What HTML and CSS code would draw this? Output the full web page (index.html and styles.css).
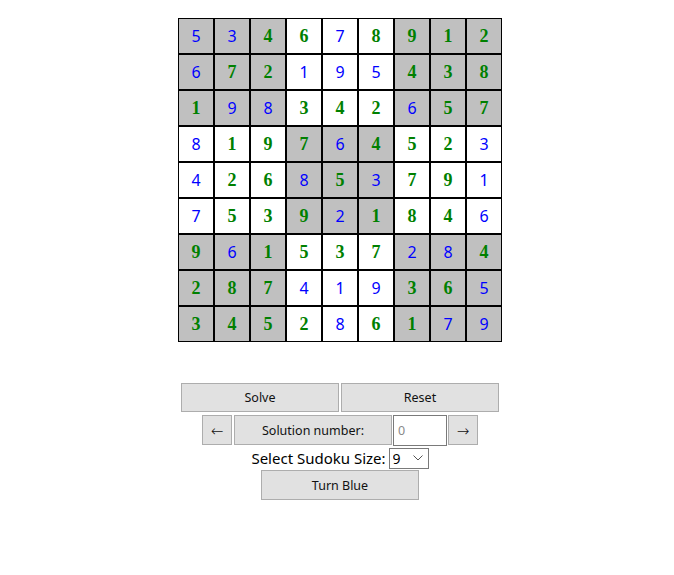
FILE: index.html
```html
<!DOCTYPE html>
<html>
<head>
<meta charset="utf-8">
<link rel="stylesheet" href="styles.css">
</head>
<body>
<div class="app">
  <table class="board">
    <tbody>
      <tr><td class="s given">5</td><td class="s given">3</td><td class="s">4</td><td>6</td><td class="given">7</td><td>8</td><td class="s">9</td><td class="s">1</td><td class="s">2</td></tr>
      <tr><td class="s given">6</td><td class="s">7</td><td class="s">2</td><td class="given">1</td><td class="given">9</td><td class="given">5</td><td class="s">4</td><td class="s">3</td><td class="s">8</td></tr>
      <tr><td class="s">1</td><td class="s given">9</td><td class="s given">8</td><td>3</td><td>4</td><td>2</td><td class="s given">6</td><td class="s">5</td><td class="s">7</td></tr>
      <tr><td class="given">8</td><td>1</td><td>9</td><td class="s">7</td><td class="s given">6</td><td class="s">4</td><td>5</td><td>2</td><td class="given">3</td></tr>
      <tr><td class="given">4</td><td>2</td><td>6</td><td class="s given">8</td><td class="s">5</td><td class="s given">3</td><td>7</td><td>9</td><td class="given">1</td></tr>
      <tr><td class="given">7</td><td>5</td><td>3</td><td class="s">9</td><td class="s given">2</td><td class="s">1</td><td>8</td><td>4</td><td class="given">6</td></tr>
      <tr><td class="s">9</td><td class="s given">6</td><td class="s">1</td><td>5</td><td>3</td><td>7</td><td class="s given">2</td><td class="s given">8</td><td class="s">4</td></tr>
      <tr><td class="s">2</td><td class="s">8</td><td class="s">7</td><td class="given">4</td><td class="given">1</td><td class="given">9</td><td class="s">3</td><td class="s">6</td><td class="s given">5</td></tr>
      <tr><td class="s">3</td><td class="s">4</td><td class="s">5</td><td>2</td><td class="given">8</td><td>6</td><td class="s">1</td><td class="s given">7</td><td class="s given">9</td></tr>
    </tbody>
  </table>
  <div class="controls">
    <div class="row row-main">
      <button class="btn wide">Solve</button>
      <button class="btn wide">Reset</button>
    </div>
    <div class="row row-nav">
      <button class="btn arrow">&larr;</button>
      <button class="btn wide">Solution number:</button>
      <input class="num" type="text" placeholder="0">
      <button class="btn arrow">&rarr;</button>
    </div>
    <div class="row row-size">
      <span class="label">Select Sudoku Size:</span>
      <select class="size"><option>9</option><option>4</option><option>16</option></select>
    </div>
    <div class="row row-blue">
      <button class="btn wide">Turn Blue</button>
    </div>
  </div>
</div>
</body>
</html>
```

FILE: styles.css
```css
html, body {
  margin: 0;
  padding: 0;
  background: #ffffff;
}

body {
  padding: 18px 0 0 178px;
  font-family: "Noto Sans", "Open Sans", sans-serif;
}

.app {
  width: 324px;
}

.board {
  border-collapse: separate;
  border-spacing: 0;
  margin: 0;
}

.board td {
  width: 34px;
  height: 34px;
  padding: 0;
  border: 1px solid #000;
  background: #ffffff;
  text-align: center;
  vertical-align: middle;
  font-family: "Liberation Serif", serif;
  font-weight: bold;
  font-size: 18px;
  color: #008000;
}

.board td.s {
  background: #c0c0c0;
}

.board td.given {
  font-family: "Noto Sans", "Open Sans", sans-serif;
  font-weight: normal;
  font-size: 16px;
  color: #0000ff;
}

.controls {
  margin-top: 41px;
  display: flex;
  flex-direction: column;
  align-items: center;
}

.row {
  display: flex;
  align-items: center;
  justify-content: center;
}

.row-main {
  gap: 2px;
  height: 29px;
}

.row-nav {
  margin-top: 3px;
  height: 30px;
}

.row-size {
  height: 22px;
  margin-top: 2px;
}

.btn {
  box-sizing: border-box;
  margin: 0;
  padding: 0;
  background: #e1e1e1;
  border: 1px solid #adadad;
  border-radius: 0;
  font-family: "Noto Sans", "Open Sans", sans-serif;
  font-size: 12.5px;
  color: #111;
}

.btn.wide {
  width: 158px;
  height: 29px;
}

.row-nav .btn.wide {
  height: 30px;
  margin: 0 1px 0 2px;
}

.btn.arrow {
  width: 30px;
  height: 30px;
  font-family: "DejaVu Sans", sans-serif;
  font-weight: 200;
  font-size: 15px;
  line-height: 1;
  padding-top: 2px;
}

.num {
  box-sizing: border-box;
  width: 54px;
  height: 31px;
  margin: 0 1px 0 0;
  padding: 0 4px;
  border: 1px solid #7a7a7a;
  font-family: "Noto Sans", "Open Sans", sans-serif;
  font-size: 12.5px;
}

.num::placeholder {
  color: #8a8a8a;
}

.label {
  font-family: "Noto Sans", "Open Sans", sans-serif;
  font-size: 15px;
  color: #000;
  margin-right: 3px;
}

.size {
  -webkit-appearance: none;
  appearance: none;
  box-sizing: border-box;
  width: 40px;
  height: 21px;
  margin: 0;
  padding: 0 0 0 3px;
  border: 1px solid #7a7a7a;
  border-radius: 0;
  background-color: #fff;
  background-image: url("data:image/svg+xml;utf8,<svg xmlns='http://www.w3.org/2000/svg' width='10' height='6' viewBox='0 0 10 6'><path d='M0.5 0.5 L5 5 L9.5 0.5' fill='none' stroke='%23555' stroke-width='1'/></svg>");
  background-repeat: no-repeat;
  background-position: right 5px center;
  font-family: "Noto Sans", "Open Sans", sans-serif;
  font-size: 14px;
  color: #000;
}

.row-blue {
  margin-top: 1px;
}

.row-blue .btn.wide {
  height: 30px;
}
```
